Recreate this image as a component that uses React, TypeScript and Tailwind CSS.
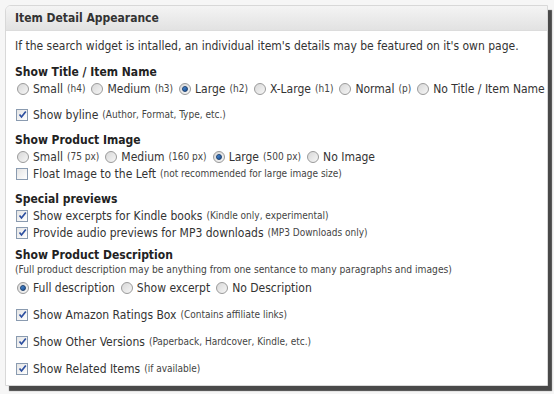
import type { ReactNode } from "react";

function Radio({ checked = false }: { checked?: boolean }) {
  return (
    <span className="relative mr-[4px] inline-flex h-[12px] w-[12px] shrink-0 items-center justify-center rounded-full border border-[#9a9a9a] bg-gradient-to-br from-[#d8d8d8] to-[#f6f6f6]">
      {checked ? (
        <span className="h-[6px] w-[6px] rounded-full border border-[#1c3f6e] bg-gradient-to-br from-[#4e8fd6] to-[#1a4f94]" />
      ) : null}
    </span>
  );
}

function Check({ checked = false }: { checked?: boolean }) {
  return (
    <span className="mr-[5px] inline-flex h-[12px] w-[12px] shrink-0 items-center justify-center border border-[#8a9bb0] bg-gradient-to-br from-[#e4e4e4] to-[#ffffff]">
      {checked ? (
        <svg width="9" height="9" viewBox="0 0 9 9">
          <path d="M1.5 4.5 L3.5 7 L7.8 1.5" fill="none" stroke="#2d4fa0" strokeWidth="1.7" />
        </svg>
      ) : null}
    </span>
  );
}

function Hint({ children }: { children: ReactNode }) {
  return <span className="ml-[4px] text-[10px] text-[#444]">{children}</span>;
}

function Opt({ checked, label, hint }: { checked?: boolean; label: string; hint?: string }) {
  return (
    <span className="mr-[6px] inline-flex items-center">
      <Radio checked={checked} />
      <span>{label}</span>
      {hint ? <Hint>{hint}</Hint> : null}
    </span>
  );
}

function CheckRow({ label, hint, className = "" }: { label: string; hint?: string; className?: string }) {
  return (
    <div className={`flex h-[17px] items-center pl-[1px] ${className}`}>
      <Check checked />
      <span>{label}</span>
      {hint ? <Hint>{hint}</Hint> : null}
    </div>
  );
}

export default function App() {
  return (
    <div className="min-h-screen bg-[#f6f6f6] pl-[5px] pt-[5px] font-['DejaVu_Sans_Condensed',sans-serif] text-[12px] text-[#333]">
      <div className="h-[381px] w-[543px] overflow-hidden rounded-tl-[6px] border border-[#d8d8d8] bg-white shadow-[4px_5px_1px_rgba(30,30,30,0.8)]">
        <div className="flex h-[25px] items-center border-b border-[#dcdcdc] bg-gradient-to-b from-[#f4f4f4] to-[#e2e2e2] px-[9px] text-[12px] font-bold text-[#333]">
          Item Detail Appearance
        </div>

        <div className="px-[9px]">
          <div className="mt-[6px] flex h-[17px] items-center">
            If the search widget is intalled, an individual item's details may be featured on it's own page.
          </div>

          <div className="mt-[9px] flex h-[17px] items-center font-bold text-[#222]">Show Title / Item Name</div>
          <div className="flex h-[17px] items-center whitespace-nowrap pl-[2px]">
            <Opt label="Small" hint="(h4)" />
            <Opt label="Medium" hint="(h3)" />
            <Opt checked label="Large" hint="(h2)" />
            <Opt label="X-Large" hint="(h1)" />
            <Opt label="Normal" hint="(p)" />
            <Opt label="No Title / Item Name" />
          </div>
          <CheckRow className="mt-[9px]" label="Show byline" hint="(Author, Format, Type, etc.)" />

          <div className="mt-[8px] flex h-[17px] items-center font-bold text-[#222]">Show Product Image</div>
          <div className="flex h-[17px] items-center whitespace-nowrap pl-[2px]">
            <Opt label="Small" hint="(75 px)" />
            <Opt label="Medium" hint="(160 px)" />
            <Opt checked label="Large" hint="(500 px)" />
            <Opt label="No Image" />
          </div>
          <div className="flex h-[17px] items-center pl-[1px]">
            <Check />
            <span>Float Image to the Left</span>
            <Hint>(not recommended for large image size)</Hint>
          </div>

          <div className="mt-[8px] flex h-[17px] items-center font-bold text-[#222]">Special previews</div>
          <CheckRow label="Show excerpts for Kindle books" hint="(Kindle only, experimental)" />
          <CheckRow label="Provide audio previews for MP3 downloads" hint="(MP3 Downloads only)" />

          <div className="mt-[6px] flex h-[16px] items-center font-bold text-[#222]">Show Product Description</div>
          <div className="flex h-[14px] items-center text-[10.2px] text-[#444]">
            (Full product description may be anything from one sentance to many paragraphs and images)
          </div>
          <div className="mt-[2px] flex h-[17px] items-center whitespace-nowrap pl-[2px]">
            <Opt checked label="Full description" />
            <Opt label="Show excerpt" />
            <Opt label="No Description" />
          </div>

          <CheckRow className="mt-[10px]" label="Show Amazon Ratings Box" hint="(Contains affiliate links)" />
          <CheckRow className="mt-[10px]" label="Show Other Versions" hint="(Paperback, Hardcover, Kindle, etc.)" />
          <CheckRow className="mt-[10px]" label="Show Related Items" hint="(if available)" />
        </div>
      </div>
    </div>
  );
}
